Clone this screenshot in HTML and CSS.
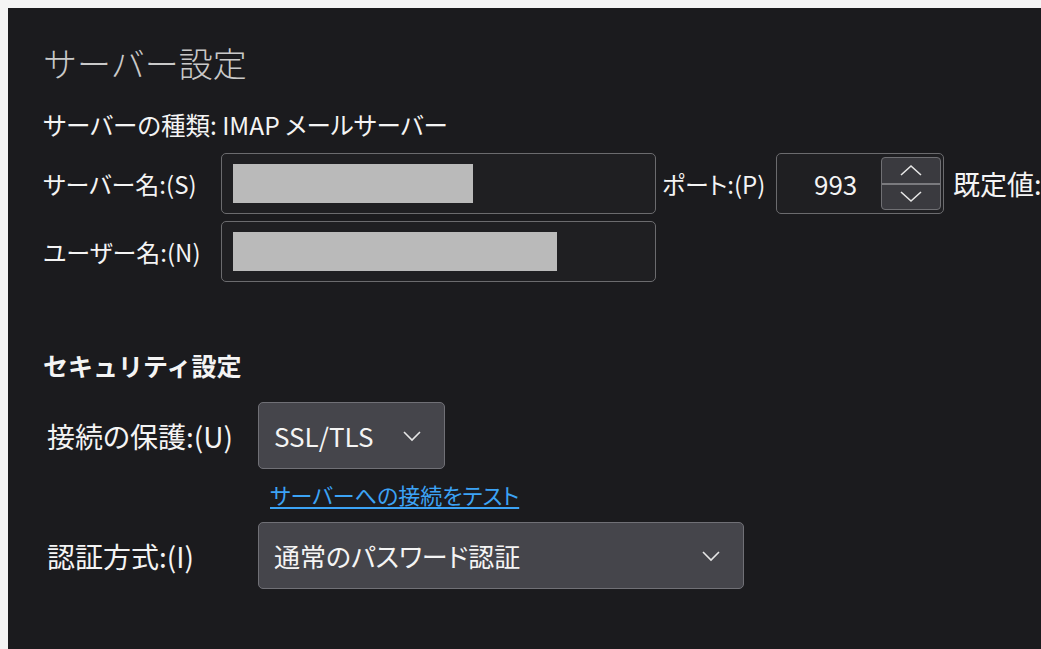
FILE: index.html
```html
<!DOCTYPE html>
<html lang="ja">

<head>
    <meta charset="UTF-8">
    <title>サーバー設定</title>
    <link rel="stylesheet" href="styles.css">
</head>

<body>
    <div class="panel">
        <h1 class="title">サーバー設定</h1>
        <div class="type">サーバーの種類: IMAP メールサーバー</div>

        <div class="row">
            <span class="label">サーバー名:(S)</span>
            <div class="textbox wide"><div class="mask mask1"></div></div>
            <span class="port-label">ポート:(P)</span>
            <div class="textbox port">
                <span class="port-value">993</span>
                <div class="spin">
                    <div class="spin-btn">
                        <svg width="26" height="14" viewBox="0 0 26 14"><path d="M3 12 L13 3 L23 12" fill="none" stroke="#e6e6e6" stroke-width="1.6"/></svg>
                    </div>
                    <div class="spin-btn">
                        <svg width="26" height="14" viewBox="0 0 26 14"><path d="M3 2 L13 11 L23 2" fill="none" stroke="#e6e6e6" stroke-width="1.6"/></svg>
                    </div>
                </div>
            </div>
            <span class="default">既定値: 993</span>
        </div>

        <div class="row row2">
            <span class="label">ユーザー名:(N)</span>
            <div class="textbox wide"><div class="mask mask2"></div></div>
        </div>

        <h2 class="section">セキュリティ設定</h2>

        <div class="row row3">
            <span class="label label2">接続の保護:(U)</span>
            <div class="combo small">
                <span>SSL/TLS</span>
                <svg class="chev" width="20" height="12" viewBox="0 0 20 12"><path d="M2 2 L10 10 L18 2" fill="none" stroke="#e6e6e6" stroke-width="1.6"/></svg>
            </div>
        </div>
        <a class="test-link" href="#">サーバーへの接続をテスト</a>

        <div class="row row4">
            <span class="label label2">認証方式:(I)</span>
            <div class="combo big">
                <span>通常のパスワード認証</span>
                <svg class="chev" width="20" height="12" viewBox="0 0 20 12"><path d="M2 2 L10 10 L18 2" fill="none" stroke="#e6e6e6" stroke-width="1.6"/></svg>
            </div>
        </div>
    </div>
</body>

</html>
```

FILE: styles.css
```css
* {
    box-sizing: border-box;
}

body {
    margin: 8px 0 0 8px;
    background-color: #f4f4f4;
    font-family: "Noto Sans CJK JP", "Noto Sans", sans-serif;
    font-feature-settings: "palt";
    color: #f4f4f4;
    overflow: hidden;
}

.panel {
    background-color: #1b1b1e;
    height: calc(100vh - 8px);
    padding: 35px 0 0 35px;
    overflow: hidden;
}

.title {
    font-size: 34px;
    font-weight: 300;
    font-feature-settings: normal;
    line-height: 40px;
    color: #c9c9c9;
    margin: 0;
}

.type {
    font-size: 24.5px;
    line-height: 30px;
    margin-top: 27px;
}

.row {
    display: flex;
    align-items: center;
    margin-top: 13px;
    font-size: 24px;
}

.row2 {
    margin-top: 7px;
}

.label {
    width: 178px;
    flex-shrink: 0;
}

.label2 {
    width: 215px;
    padding-left: 4px;
    font-size: 28px;
}

.textbox {
    height: 61px;
    border: 1px solid #6b6b6e;
    border-radius: 5px;
    background-color: #1f1f22;
    display: flex;
    align-items: center;
    flex-shrink: 0;
}

.wide {
    width: 435px;
    padding-left: 11px;
}

.mask {
    height: 39px;
    background-color: #bababa;
}

.mask1 {
    width: 240px;
}

.mask2 {
    width: 324px;
}

.port-label {
    margin-left: 6px;
    width: 114px;
    flex-shrink: 0;
}

.port {
    width: 168px;
    padding: 0 2px 0 37px;
    justify-content: space-between;
}

.port-value {
    font-size: 26px;
}

.spin {
    width: 60px;
    height: 53px;
    border: 1px solid #707074;
    border-radius: 4px;
    background-color: #3a3a3f;
    display: flex;
    flex-direction: column;
}

.spin-btn {
    flex: 1;
    display: flex;
    align-items: center;
    justify-content: center;
}

.spin-btn + .spin-btn {
    border-top: 2px solid #7a7a7e;
}

.default {
    margin-left: 9px;
    white-space: nowrap;
    flex-shrink: 0;
    font-size: 27px;
}

.section {
    font-size: 25px;
    font-weight: 700;
    font-feature-settings: normal;
    line-height: 32px;
    margin: 67px 0 0 0;
}

.row3 {
    margin-top: 21px;
}

.combo {
    height: 67px;
    border: 1px solid #707076;
    border-radius: 5px;
    background-color: #45454b;
    display: flex;
    align-items: center;
    justify-content: space-between;
    padding: 0 22px 0 15px;
    font-size: 26px;
}

.small {
    width: 187px;
}

.big {
    width: 486px;
}

.test-link {
    display: inline-block;
    margin: 11px 0 0 227px;
    font-size: 22px;
    line-height: 28px;
    color: #3ca3f5;
    text-decoration: underline;
    text-underline-offset: 3px;
}

.row4 {
    margin-top: 13px;
}
```
